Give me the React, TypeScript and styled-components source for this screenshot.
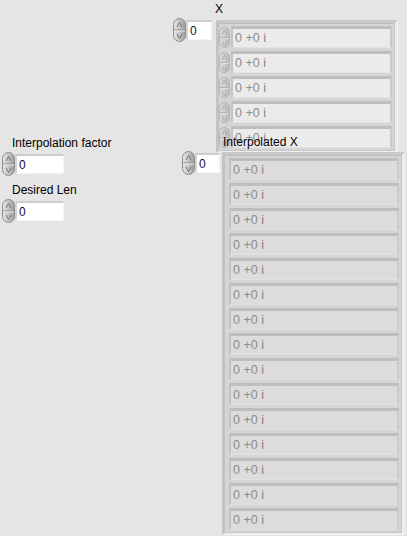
import React from "react"
import styled, { createGlobalStyle } from "styled-components"

const GlobalStyle = createGlobalStyle`
  html, body {
    margin: 0;
    padding: 0;
    background: #e5e5e5;
  }
`

const Panel = styled.div`
  position: relative;
  width: 407px;
  height: 536px;
  overflow: hidden;
  background: #e5e5e5;
  font-family: "Liberation Sans", Arial, sans-serif;
  font-size: 12px;
  color: #000;
`

/* front panel objects sit on a free canvas */
const PanelObject = styled.div<{ $x: number; $y: number }>`
  position: absolute;
  left: ${p => p.$x}px;
  top: ${p => p.$y}px;
  display: flex;
  flex-direction: column;
`

const Label = styled.div<{ $indent?: number; $gap?: number }>`
  margin-left: ${p => p.$indent || 0}px;
  margin-bottom: ${p => p.$gap || 0}px;
  height: 15px;
  line-height: 15px;
  white-space: nowrap;
  position: relative;
  z-index: 2;
`

const Row = styled.div<{ $top?: number; $left?: number }>`
  display: flex;
  align-items: flex-start;
  margin-top: ${p => p.$top || 0}px;
  margin-left: ${p => p.$left || 0}px;
`

const NumRow = styled.div`
  display: flex;
  align-items: center;
`

const NumBox = styled.div<{ $w: number }>`
  box-sizing: border-box;
  width: ${p => p.$w}px;
  height: 20px;
  background: #fff;
  border-top: 2px solid #cdcdcd;
  border-left: 2px solid #d4d4d4;
  border-right: 1px solid #f3f3f3;
  border-bottom: 1px solid #f3f3f3;
  padding-left: 2px;
  display: flex;
  align-items: center;
  color: #101030;
`

const ArrayFrame = styled.div<{ $w: number; $h: number; $pl: number }>`
  box-sizing: border-box;
  width: ${p => p.$w}px;
  height: ${p => p.$h}px;
  background: #d5d5d5;
  border-top: 3px solid #c9c9c9;
  border-left: 3px solid #c3c3c3;
  border-right: 3px solid #eeeeee;
  border-bottom: 2px solid #eeeeee;
  box-shadow: inset -1px 0 0 #c6c6c6, inset 0 1px 0 #bdbdbd, inset 0 -1px 0 #c6c6c6;
  padding: 3px 3px 0 ${p => p.$pl}px;
  display: flex;
  flex-direction: column;
  gap: 3px;
  overflow: hidden;
`

const Element = styled.div`
  display: flex;
  align-items: center;
  gap: 1px;
  height: 22px;
  flex-shrink: 0;
`

const ElemBox = styled.div<{ $bg: string }>`
  box-sizing: border-box;
  flex: 1;
  height: 22px;
  background: ${p => p.$bg};
  border-top: 3px solid #bebebe;
  border-left: 2px solid #c4c4c4;
  border-right: 2px solid #cacaca;
  border-bottom: 1px solid #e2e2e2;
  padding-left: 2px;
  display: flex;
  align-items: center;
  color: #8d8d8d;
  font-size: 12.5px;
  white-space: pre;
`

const Imag = styled.span`
  color: #8e7d86;
`

const Spinner = ({ w = 13, h = 24, faded = false }: { w?: number; h?: number; faded?: boolean }) => {
  const id = faded ? "spf" : "spn"
  const mid = h / 2
  return (
    <svg width={w} height={h} viewBox={`0 0 ${w} ${h}`} style={{ flexShrink: 0, opacity: faded ? 0.45 : 1 }}>
      <defs>
        <linearGradient id={id} x1="0" x2="1" y1="0" y2="0">
          <stop offset="0" stopColor="#e8e8e8" />
          <stop offset="0.5" stopColor="#c4c4c4" />
          <stop offset="1" stopColor="#9a9a9a" />
        </linearGradient>
      </defs>
      <rect x="0.5" y="0.5" width={w - 1} height={h - 1} rx={w / 2 - 0.5} fill={`url(#${id})`} stroke="#8d8d8d" />
      <line x1="1" x2={w - 1} y1={mid} y2={mid} stroke="#8a8a8a" />
      <line x1="1" x2={w - 1} y1={mid + 1} y2={mid + 1} stroke="#eeeeee" />
      <path d={`M${w / 2 - 2.5} ${mid - 3} L${w / 2} ${mid - 7.5} L${w / 2 + 2.5} ${mid - 3}`} fill="none" stroke="#6a6a6a" strokeWidth="0.9" />
      <path d={`M${w / 2 - 2.5} ${mid + 4} L${w / 2} ${mid + 8.5} L${w / 2 + 2.5} ${mid + 4}`} fill="none" stroke="#6a6a6a" strokeWidth="0.9" />
    </svg>
  )
}

const Numeric = ({ label, boxWidth }: { label: string; boxWidth: number }) => (
  <>
    <Label $indent={10} $gap={1}>{label}</Label>
    <NumRow>
      <Spinner />
      <NumBox $w={boxWidth}>0</NumBox>
    </NumRow>
  </>
)

const Complex = () => (
  <>
    {"0 +0 "}
    <Imag>i</Imag>
  </>
)

const App = () => {
  const xItems = Array.from({ length: 5 })
  const outItems = Array.from({ length: 15 })
  return (
    <Panel>
      <GlobalStyle />

      <PanelObject $x={173} $y={2}>
        <Label $indent={42}>X</Label>
        <Row $top={1}>
          <NumRow>
            <Spinner />
            <NumBox $w={26}>0</NumBox>
          </NumRow>
          <Row $top={2} $left={4}>
            <ArrayFrame $w={182} $h={133} $pl={0}>
              {xItems.map((_, i) => (
                <Element key={i}>
                  <Spinner w={11} h={21} faded />
                  <ElemBox $bg="#ebebeb">
                    <Complex />
                  </ElemBox>
                </Element>
              ))}
            </ArrayFrame>
          </Row>
        </Row>
      </PanelObject>

      <PanelObject $x={182} $y={135}>
        <Label $indent={41}>Interpolated X</Label>
        <Row $top={1}>
          <NumRow>
            <Spinner />
            <NumBox $w={25}>0</NumBox>
          </NumRow>
          <Row $top={1} $left={2}>
            <ArrayFrame $w={183} $h={383} $pl={4}>
              {outItems.map((_, i) => (
                <Element key={i}>
                  <ElemBox $bg="#dcdcdc">
                    <Complex />
                  </ElemBox>
                </Element>
              ))}
            </ArrayFrame>
          </Row>
        </Row>
      </PanelObject>

      <PanelObject $x={2} $y={136}>
        <Numeric label="Interpolation factor" boxWidth={49} />
      </PanelObject>

      <PanelObject $x={2} $y={183}>
        <Numeric label="Desired Len" boxWidth={49} />
      </PanelObject>
    </Panel>
  )
}

export default App
